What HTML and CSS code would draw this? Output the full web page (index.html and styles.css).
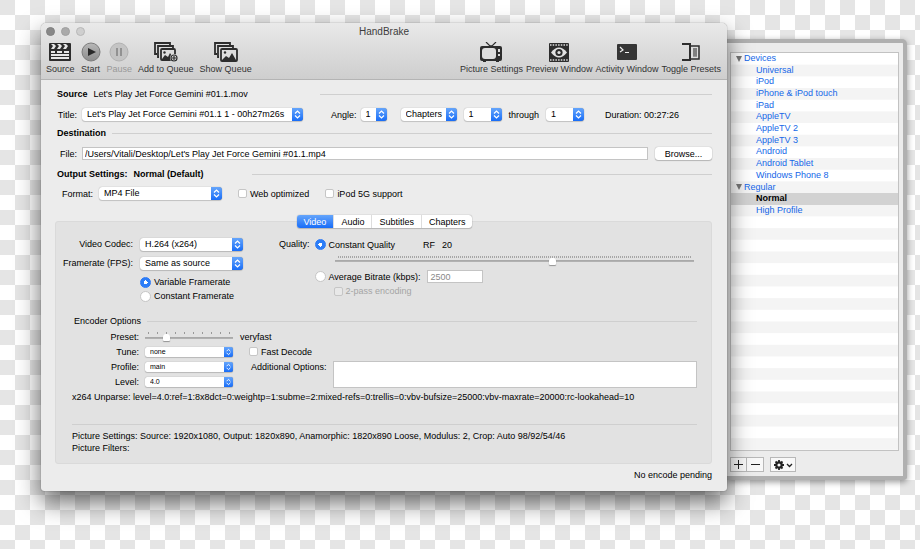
FILE: index.html
```html
<!DOCTYPE html>
<html lang="en">
<head>
    <meta charset="UTF-8">
    <meta name="viewport" content="width=device-width, initial-scale=1.0">
    <title>HandBrake</title>
    <link rel="stylesheet" href="styles.css">
</head>
<body>
    <main class="window">
        <header class="titlebar">
            <div class="title-row">
                <div class="lights">
                    <span class="light light-close"></span>
                    <span class="light light-min"></span>
                    <span class="light light-zoom"></span>
                </div>
                <h1>HandBrake</h1>
            </div>
            <div class="toolbar">
                <div class="tool-group">
                    <button class="tool">
                        <svg width="22" height="20" viewBox="0 0 22 20"><rect x="0" y="1" width="22" height="18" rx="1" fill="#2d2d2d"/><path d="M2 2h3l2 2-2 3H2l2-3zM8 2h3l2 2-2 3H8l2-3zM14 2h3l2 2-2 3h-3l2-3z" fill="#e6e6e6"/><path d="M2 9h4v2H2zM8 9h5v2H8zM15 9h5v2h-5zM2 12h18v2H2zM2 15h18v2H2z" fill="#e6e6e6"/></svg>
                        <span>Source</span>
                    </button>
                    <button class="tool">
                        <svg width="20" height="20" viewBox="0 0 20 20"><defs><linearGradient id="round" x2="0" y2="1"><stop stop-color="#b8b8b8"/><stop offset="1" stop-color="#8c8c8c"/></linearGradient></defs><circle cx="10" cy="10" r="9" fill="url(#round)" stroke="#7c7c7c"/><path d="M7 6l8 4-8 4z" fill="#2a2a2a"/></svg>
                        <span>Start</span>
                    </button>
                    <button class="tool" disabled>
                        <svg width="20" height="20" viewBox="0 0 20 20"><circle cx="10" cy="10" r="9" fill="#c4c4c4" stroke="#b2b2b2"/><path d="M8 6v8M12 6v8" stroke="#929292" stroke-width="2"/></svg>
                        <span>Pause</span>
                    </button>
                    <button class="tool">
                        <svg width="24" height="20" viewBox="0 0 24 20"><g fill="none" stroke="#2d2d2d" stroke-width="1.800"><path d="M3 12H1V1h15v2"/><path d="M5 15H4V4h15v2"/><rect x="7" y="7" width="14" height="11" rx="1" fill="#ddd"/></g><path d="M8 17l3-4 3 2 2-4 4 6z" fill="#2d2d2d"/><circle cx="10.500" cy="10.500" r="1.200" fill="#2d2d2d"/><circle cx="20" cy="16" r="4" fill="#ddd"/><circle cx="20" cy="16" r="3" fill="none" stroke="#2d2d2d" stroke-width="1.200"/><path d="M20 14v4M18 16h4" stroke="#2d2d2d" stroke-width="1.200"/></svg>
                        <span>Add to Queue</span>
                    </button>
                    <button class="tool">
                        <svg width="24" height="20" viewBox="0 0 24 20"><g fill="none" stroke="#2d2d2d" stroke-width="1.800"><path d="M3 12H1V1h15v2"/><path d="M5 15H4V4h15v2"/><rect x="7" y="7" width="16" height="12" rx="1" fill="#ddd"/></g><path d="M8 18l4-4 3 2 3-5 4 7z" fill="#2d2d2d"/><circle cx="11" cy="10.500" r="1.200" fill="#2d2d2d"/></svg>
                        <span>Show Queue</span>
                    </button>
                </div>
                <div class="tool-group tool-group-right">
                    <button class="tool">
                        <svg width="22" height="20" viewBox="0 0 22 20"><path d="M6 0l5 5 5-5" fill="none" stroke="#2d2d2d" stroke-width="1.200"/><path d="M8 5l3-2 3 2z" fill="#2d2d2d"/><rect x="0" y="4" width="22" height="15" rx="2" fill="#2d2d2d"/><rect x="2" y="6" width="14" height="11" rx="3" fill="#ddd"/><path d="M18 7h2v3h-2zM18 12h2v2h-2z" fill="#ddd"/><path d="M3 19h3v1H3zM16 19h3v1h-3z" fill="#2d2d2d"/></svg>
                        <span>Picture Settings</span>
                    </button>
                    <button class="tool">
                        <svg width="20" height="20" viewBox="0 0 20 20"><rect x="0" y="1" width="20" height="19" rx="1" fill="#2d2d2d"/><path d="M1 3h18M1 18h18" stroke="#ddd" stroke-width="1.500" stroke-dasharray="1.500 1.200"/><path d="M2 10.500q8-10 16 0q-8 10-16 0z" fill="#e2e2e2"/><circle cx="10" cy="10.500" r="3.600" fill="#2d2d2d"/><circle cx="10" cy="10.500" r="1.600" fill="#e2e2e2"/></svg>
                        <span>Preview Window</span>
                    </button>
                    <button class="tool">
                        <svg width="20" height="20" viewBox="0 0 20 20"><rect x="0" y="2" width="20" height="16" rx="1" fill="#353535"/><path d="M3 5l3 3-3 2M8 10.500h4" fill="none" stroke="#eee" stroke-width="1.200"/></svg>
                        <span>Activity Window</span>
                    </button>
                    <button class="tool">
                        <svg width="20" height="20" viewBox="0 0 20 20"><path d="M1 2h8v16H1" fill="none" stroke="#2d2d2d" stroke-width="2"/><path d="M10 4h8v13h-8" fill="#ddd" stroke="#2d2d2d" stroke-width="1.500"/><path d="M12 6h4v9h-4z" fill="#999"/><path d="M12 7h4M12 9h4M12 11h4M12 13h4" stroke="#666"/></svg>
                        <span>Toggle Presets</span>
                    </button>
                </div>
            </div>
        </header>

        <form class="content">
            <section class="row heading">
                <h2>Source</h2>
                <span class="source-name">Let's Play Jet Force Gemini #01.1.mov</span>
                <span class="rule rule-source"></span>
            </section>
            <div class="row title-line">
                <label class="label-title" for="title">Title:</label>
                <select class="popup select-title" id="title"><option>Let's Play Jet Force Gemini #01.1 1 - 00h27m26s</option></select>
                <label class="label-angle" for="angle">Angle:</label>
                <select class="popup select-angle" id="angle"><option>1</option></select>
                <select class="popup select-range" aria-label="Range type"><option>Chapters</option></select>
                <select class="popup select-chapter" aria-label="First chapter"><option>1</option></select>
                <label class="label-through" for="last">through</label>
                <select class="popup select-chapter" id="last"><option>1</option></select>
                <span class="duration">Duration: 00:27:26</span>
            </div>
            <section class="row heading">
                <h2>Destination</h2>
                <span class="rule"></span>
            </section>
            <div class="row file-line">
                <label class="label-title" for="file">File:</label>
                <input class="field file" type="text" id="file" value="/Users/Vitali/Desktop/Let's Play Jet Force Gemini #01.1.mp4">
                <button class="browse" type="button">Browse...</button>
            </div>
            <section class="row heading">
                <h2>Output Settings:</h2>
                <strong>Normal (Default)</strong>
                <span class="rule rule-output"></span>
            </section>
            <div class="row format-line">
                <label class="label-format" for="format">Format:</label>
                <select class="popup select-format" id="format"><option>MP4 File</option></select>
                <label class="check"><input type="checkbox">Web optimized</label>
                <label class="check"><input type="checkbox">iPod 5G support</label>
            </div>

            <nav class="tabs">
                <button class="tab tab-active" type="button">Video</button>
                <button class="tab" type="button">Audio</button>
                <button class="tab" type="button">Subtitles</button>
                <button class="tab" type="button">Chapters</button>
            </nav>
            <section class="panel">
                <div class="video">
                    <div class="codec">
                        <label for="codec">Video Codec:</label>
                        <select class="popup" id="codec"><option>H.264 (x264)</option></select>
                        <label for="fps">Framerate (FPS):</label>
                        <select class="popup" id="fps"><option>Same as source</option></select>
                        <div class="modes">
                            <label class="check"><input type="radio" name="rate" checked>Variable Framerate</label>
                            <label class="check"><input type="radio" name="rate">Constant Framerate</label>
                        </div>
                    </div>
                    <div class="quality">
                        <span class="quality-label">Quality:</span>
                        <div class="quality-body">
                            <div class="quality-row">
                                <label class="check"><input type="radio" name="quality" checked>Constant Quality</label>
                                <span class="rf">RF</span>
                                <span>20</span>
                            </div>
                            <div class="slider slider-quality">
                                <input type="range" min="0" max="51" step="0.1" value="31" aria-label="Constant quality">
                            </div>
                            <div class="quality-row bitrate">
                                <label class="check"><input type="radio" name="quality">Average Bitrate (kbps):</label>
                                <input class="field kbps" type="text" value="2500" aria-label="Bitrate" disabled>
                            </div>
                            <label class="check check-disabled"><input type="checkbox" disabled>2-pass encoding</label>
                        </div>
                    </div>
                </div>

                <div class="row encoder-heading">
                    <h3>Encoder Options</h3>
                    <span class="rule"></span>
                </div>
                <div class="encoder">
                    <label for="preset">Preset:</label>
                    <div class="slider slider-preset">
                        <input type="range" id="preset" min="0" max="9" value="2">
                    </div>
                    <span class="preset-name">veryfast</span>
                    <label for="tune">Tune:</label>
                    <select class="popup popup-mini" id="tune"><option>none</option></select>
                    <label class="check fast"><input type="checkbox">Fast Decode</label>
                    <label for="profile">Profile:</label>
                    <select class="popup popup-mini" id="profile"><option>main</option></select>
                    <div class="additional">
                        <label for="extra">Additional Options:</label>
                        <textarea id="extra"></textarea>
                    </div>
                    <label for="level">Level:</label>
                    <select class="popup popup-mini" id="level"><option>4.0</option></select>
                </div>
                <p class="unparse">x264 Unparse: level=4.0:ref=1:8x8dct=0:weightp=1:subme=2:mixed-refs=0:trellis=0:vbv-bufsize=25000:vbv-maxrate=20000:rc-lookahead=10</p>
                <div class="summary">
                    <p>Picture Settings: Source: 1920x1080, Output: 1820x890, Anamorphic: 1820x890 Loose, Modulus: 2, Crop: Auto 98/92/54/46</p>
                    <p>Picture Filters:</p>
                </div>
            </section>
            <p class="status">No encode pending</p>
        </form>
    </main>

    <aside class="drawer">
        <ul class="presets">
            <li class="folder">Devices</li>
            <li>Universal</li>
            <li>iPod</li>
            <li>iPhone &amp; iPod touch</li>
            <li>iPad</li>
            <li>AppleTV</li>
            <li>AppleTV 2</li>
            <li>AppleTV 3</li>
            <li>Android</li>
            <li>Android Tablet</li>
            <li>Windows Phone 8</li>
            <li class="folder">Regular</li>
            <li class="selected">Normal</li>
            <li>High Profile</li>
        </ul>
        <div class="drawer-actions">
            <button aria-label="Add preset"><svg width="9" height="9" viewBox="0 0 9 9"><path d="M0 4.500h9M4.500 0v9" stroke="#222"/></svg></button>
            <button aria-label="Remove preset"><svg width="9" height="9" viewBox="0 0 9 9"><path d="M0 4.500h9" stroke="#222"/></svg></button>
            <button class="gear" aria-label="Preset actions"><svg width="20" height="12" viewBox="0 0 20 12"><circle cx="6" cy="6" r="2.700" fill="none" stroke="#222" stroke-width="2.200"/><path d="M6 1v2M6 9v2M1 6h2M9 6h2M2.500 2.500l1.500 1.500M8 8l1.500 1.500M9.500 2.500L8 4M4 8L2.500 9.500" stroke="#222" stroke-width="1.800"/><path d="M14 5l2.500 2.500L19 5" fill="none" stroke="#222" stroke-width="1.300"/></svg></button>
        </div>
    </aside>
</body>
</html>
```
FILE: styles.css
```css
* {
    margin: 0;
    padding: 0;
    box-sizing: border-box;
}

body {
    font: 9px/12px "Liberation Sans", Arial, sans-serif;
    color: #000;
    min-height: 100vh;
    padding: 23px 13px 58px 41px;
    display: flex;
    align-items: flex-start;
    background: repeating-conic-gradient(#fff 0 25%, #e5e5e5 0 50%) 0 0 / 30px 30px;
}

button,
input,
select,
textarea {
    font: inherit;
    color: inherit;
}

h1, h2, h3 {
    font-size: inherit;
    white-space: nowrap;
}

h3 {
    font-weight: normal;
}

/* Main window */

.window {
    flex: 1;
    min-width: 0;
    position: relative;
    z-index: 1;
    background: #ececec;
    border-radius: 5px 5px 3px 3px;
    box-shadow: 0 0 1px rgba(0, 0, 0, 0.6), 0 11px 24px rgba(0, 0, 0, 0.6);
}

.titlebar {
    height: 57px;
    background: linear-gradient(#e9e9e9, #cecece);
    border-bottom: 1px solid #b4b4b4;
    border-radius: 5px 5px 0 0;
}

.title-row {
    display: grid;
    grid-template-columns: 1fr auto 1fr;
    align-items: center;
    height: 17px;
}

.title-row h1 {
    font-size: 10px;
    font-weight: normal;
    color: #3c3c3c;
}

.lights {
    display: flex;
    gap: 6px;
    padding-left: 5px;
}

.light {
    width: 9px;
    height: 9px;
    border-radius: 50%;
    border: 1px solid #b8b8b8;
    background: #cfcfcf;
}

.light-close {
    background: #888;
    border-color: #808080;
}

.light-min {
    background: #aaa;
    border-color: #a0a0a0;
}

.toolbar,
.tool-group {
    display: flex;
    justify-content: space-between;
}

.toolbar {
    padding: 2px 6px 0 5px;
}

.tool-group {
    gap: 6px;
}

.tool-group-right {
    gap: 3px;
}

.tool {
    display: flex;
    flex-direction: column;
    align-items: center;
    gap: 1px;
    border: none;
    background: none;
    color: #333;
    white-space: nowrap;
}

.tool svg {
    display: block;
}

.tool:disabled {
    color: #999;
}

/* Form rows */

.content {
    padding: 7px 15px 10px 16px;
}

.row {
    display: flex;
    align-items: center;
}

.heading {
    height: 14px;
    gap: 6px;
}

.heading strong {
    white-space: nowrap;
}

.rule {
    flex: 1;
    height: 1px;
    background: #cfcfcf;
}

.heading .rule-source {
    margin-left: 66px;
}

.heading .rule-output {
    margin-left: 42px;
}

.popup {
    appearance: none;
    height: 13px;
    padding: 0 14px 0 5px;
    border: none;
    border-radius: 3px;
    line-height: 13px;
    box-shadow: 0 0 1px rgba(0, 0, 0, 0.4), 0 1px 1px rgba(0, 0, 0, 0.15);
    background:
        url("data:image/svg+xml,%3Csvg xmlns='http://www.w3.org/2000/svg' width='11' height='13' viewBox='0 0 11 13'%3E%3Cpath d='M3 5.500L5.500 3 8 5.500M3 7.500L5.500 10 8 7.500' fill='none' stroke='white' stroke-width='1.200'/%3E%3C/svg%3E") right center no-repeat,
        linear-gradient(#65a5fb, #186df8) right / 11px 100% no-repeat,
        #fff;
}

.title-line {
    height: 25px;
    padding-top: 2px;
}

.label-title {
    width: 20px;
    text-align: right;
    margin-right: 5px;
}

.select-title {
    width: 221px;
}

.label-angle {
    margin-left: 28px;
    margin-right: 4px;
}

.select-angle {
    width: 26px;
    margin-right: 14px;
}

.select-range {
    width: 56px;
    margin-right: 7px;
}

.select-chapter {
    width: 38px;
    margin-right: 7px;
}

.label-through {
    margin-right: 7px;
}

.duration {
    margin-left: 14px;
    white-space: nowrap;
}

.field {
    height: 13px;
    padding: 0 2px;
    border: 1px solid #c4c4c4;
    background: #fff;
}

.file-line {
    height: 27px;
}

.file {
    flex: 1;
    min-width: 0;
}

.browse {
    width: 57px;
    height: 13px;
    margin-left: 7px;
    border: none;
    border-radius: 3px;
    background: #fff;
    box-shadow: 0 0 1px rgba(0, 0, 0, 0.4), 0 1px 1px rgba(0, 0, 0, 0.2);
}

.format-line {
    height: 25px;
    gap: 16px;
}

.label-format {
    width: 36px;
    margin-right: -10px;
    text-align: right;
}

.select-format {
    width: 123px;
}

.check {
    display: flex;
    align-items: center;
    gap: 3px;
    white-space: nowrap;
}

.check input {
    appearance: none;
    width: 9px;
    height: 9px;
    border: 1px solid #c6c6c6;
    border-radius: 2px;
    background: #fff;
}

.check input[type="radio"] {
    width: 11px;
    height: 11px;
    border-radius: 50%;
}

.check input[type="radio"]:checked {
    border-color: #2b78f5;
    background: radial-gradient(circle, #fff 0 2px, #2b7df8 2px);
}

.check-disabled {
    color: #a5a5a5;
    margin: 2px 0 0 19px;
}

.check input:disabled {
    background: #e8e8e8;
}

/* Tabs */

.tabs {
    display: flex;
    width: max-content;
    margin: 9px auto 0;
    position: relative;
    z-index: 1;
    border-radius: 3px;
    background: #fff;
    box-shadow: 0 0 1px rgba(0, 0, 0, 0.5), 0 1px 1px rgba(0, 0, 0, 0.15);
}

.tab {
    height: 13px;
    padding: 0 7px;
    border: none;
    border-left: 1px solid #ddd;
    background: none;
}

.tab-active {
    color: #fff;
    border: none;
    border-radius: 3px 0 0 3px;
    background: linear-gradient(#65a5fb, #186df8);
}

.panel {
    margin: -7px 0 0 -2px;
    padding: 16px 14px 9px 16px;
    border: 1px solid #dadada;
    border-radius: 3px;
    background: #e2e2e2;
}

.video {
    display: flex;
    gap: 36px;
}

.codec {
    display: grid;
    grid-template-columns: 61px 103px;
    column-gap: 7px;
    row-gap: 6px;
    align-content: start;
    text-align: right;
    white-space: nowrap;
}

.codec label:not(.check) {
    justify-self: end;
}

.modes {
    grid-column: 2;
    display: grid;
    gap: 2px;
}

.quality {
    flex: 1;
    display: flex;
    gap: 5px;
}

.quality-body {
    flex: 1;
}

.quality-row {
    display: flex;
    align-items: center;
    gap: 7px;
    height: 13px;
}

.rf {
    margin-left: 21px;
}

.slider {
    display: flex;
    align-items: flex-end;
    height: 10px;
}

.slider input {
    appearance: none;
    width: 100%;
    height: 8px;
    background: linear-gradient(#a5a5a5, #b5b5b5) center 3px / 100% 2px no-repeat;
}

.slider input::-webkit-slider-thumb {
    appearance: none;
    width: 7px;
    height: 7px;
    border-radius: 3px 3px 1px 1px;
    background: #fff;
    box-shadow: 0 1px 1px rgba(0, 0, 0, 0.35);
}

.slider-quality {
    height: 14px;
    margin: 0 3px 0 20px;
    background: repeating-linear-gradient(90deg, #a6a6a6 0 1px, transparent 1px 2px) 3px 5px / calc(100% - 6px) 2px no-repeat;
}

.bitrate {
    margin-top: 5px;
}

.kbps {
    width: 56px;
}

.kbps:disabled {
    color: #888;
}

.encoder-heading {
    margin: 13px 0 2px 2px;
    gap: 6px;
}

/* Encoder */

.encoder {
    display: grid;
    grid-template-columns: 67px 88px 1fr;
    column-gap: 6px;
    grid-auto-rows: 15px;
    align-items: center;
}

.encoder > label:not(.check) {
    text-align: right;
}

.slider-preset {
    background: repeating-linear-gradient(90deg, #999 0 1px, transparent 1px 9px) 3px 0 / 82px 2px no-repeat;
}

.preset-name {
    margin-left: 1px;
}

.fast {
    margin-left: 10px;
}

.popup-mini {
    height: 10px;
    font-size: 7px;
    line-height: 10px;
    border-radius: 2px;
    background-size: 9px 10px, 9px 100%, auto;
}

.additional {
    grid-row: 3 / span 2;
    grid-column: 3;
    align-self: start;
    display: flex;
    gap: 6px;
    padding: 2px 0 0 12px;
    white-space: nowrap;
}

.additional textarea {
    flex: 1;
    min-width: 0;
    height: 27px;
    border: 1px solid #c4c4c4;
    background: #fff;
    resize: none;
}

.unparse {
    margin-top: 2px;
    white-space: nowrap;
}

.summary {
    margin-top: 21px;
    padding-top: 5px;
    border-top: 1px solid #cfcfcf;
}

.status {
    padding-top: 5px;
    text-align: right;
}

/* Presets drawer */

.drawer {
    width: 180px;
    align-self: stretch;
    margin: 16px 0 11px;
    padding: 9px 4px 4px 3px;
    display: flex;
    flex-direction: column;
    border: 4px solid #b0b0b0;
    border-left: none;
    border-radius: 0 5px 4px 0;
    background: #ececec;
    box-shadow: 0 2px 6px rgba(0, 0, 0, 0.4);
}

.presets {
    flex: 1;
    display: grid;
    grid-template-rows: repeat(34, 1fr);
    border: 1px solid #c2c2c2;
    list-style: none;
    line-height: 11px;
    color: #1467e8;
    background: linear-gradient(#fff 50%, #f4f4f4 50%) 0 0 / 100% calc(100% / 17);
}

.presets li {
    padding-left: 25px;
}

.presets .folder {
    display: flex;
    align-items: center;
    gap: 2px;
    padding-left: 5px;
}

.folder::before {
    content: "";
    border: 3px solid transparent;
    border-top: 6px solid #777;
    border-bottom: none;
}

.presets .selected {
    color: #000;
    font-weight: bold;
    background: #d2d2d2;
}

.drawer-actions {
    display: flex;
    padding-top: 6px;
}

.drawer-actions button {
    display: flex;
    align-items: center;
    justify-content: center;
    width: 17px;
    height: 15px;
    border: 1px solid #b8b8b8;
    background: #f8f8f8;
}

.drawer-actions button + button {
    border-left: none;
}

.drawer-actions .gear {
    width: 26px;
    margin-left: 6px;
}

.drawer-actions button + .gear {
    border-left: 1px solid #b8b8b8;
}
```
